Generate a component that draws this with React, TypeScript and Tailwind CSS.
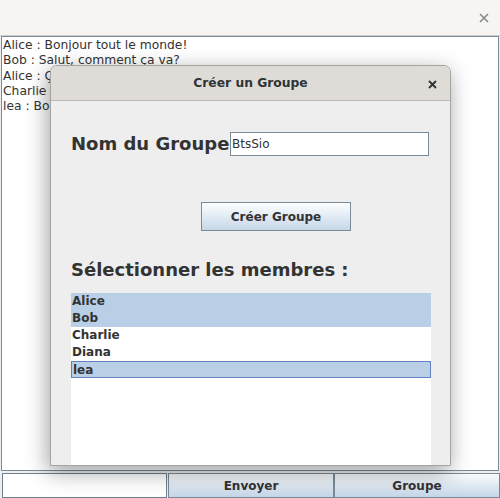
import React from "react";

const font = { fontFamily: '"DejaVu Sans", "Liberation Sans", sans-serif' };

const messages = [
  "Alice : Bonjour tout le monde!",
  "Bob : Salut, comment ça va?",
  "Alice : Ça va bien, merci!",
  "Charlie : Salut tout le monde!",
  "lea : Bonjour",
];

const members = [
  { name: "Alice", sel: true, focus: false },
  { name: "Bob", sel: true, focus: false },
  { name: "Charlie", sel: false, focus: false },
  { name: "Diana", sel: false, focus: false },
  { name: "lea", sel: true, focus: true },
];

export default function App() {
  return (
    <div
      className="relative w-[500px] h-[498px] bg-[#eeeeee] flex flex-col overflow-hidden text-[#333333]"
      style={font}
    >
      {/* window title bar */}
      <div className="h-[36px] shrink-0 bg-[#f6f5f4] border-b border-[#cfcdc9] flex items-center justify-end pr-[11px]">
        <svg width="10" height="10" viewBox="0 0 10 10">
          <path d="M1 1 L9 9 M9 1 L1 9" stroke="#888a85" strokeWidth="1.6" />
        </svg>
      </div>

      {/* chat area */}
      <div className="h-[435px] shrink-0 mx-[1px] border border-[#7a8a99] bg-white pl-[1px] pt-[1px]">
        {messages.map((m) => (
          <div key={m} className="text-[12.3px] leading-[15.3px] whitespace-nowrap">
            {m}
          </div>
        ))}
      </div>

      {/* bottom row */}
      <div className="h-[25px] shrink-0 flex mt-[2px] pl-[2px]">
        <div className="w-[165px] h-full border border-[#6f7f8f] bg-white" />
        <button className="ml-[1px] w-[166px] h-full border border-[#7a8a99] bg-gradient-to-b from-[#fbfcfd] to-[#c4d6e8] text-[12px] font-bold text-[#333333] pt-[1px]" style={font}>
          Envoyer
        </button>
        <button className="w-[166px] h-full border border-[#7a8a99] bg-gradient-to-b from-[#fbfcfd] to-[#c4d6e8] text-[12px] font-bold text-[#333333] pt-[1px]" style={font}>
          Groupe
        </button>
      </div>

      {/* dialog */}
      <div className="absolute left-[50px] top-[65px] w-[401px] h-[401px] rounded-t-[7px] flex flex-col shadow-[-2px_6px_22px_rgba(0,0,0,0.38)] border border-[#a6a4a0] bg-[#eeeeee]">
        <div className="h-[35px] shrink-0 rounded-t-[6px] bg-[#dfdcd8] border-b border-[#bcb8b2] relative flex items-center justify-center">
          <span className="text-[12.3px] font-bold text-[#2e3436]">Créer un Groupe</span>
          <svg className="absolute right-[13px] top-[14px]" width="9" height="9" viewBox="0 0 9 9">
            <path d="M1 1 L8 8 M8 1 L1 8" stroke="#2e3436" strokeWidth="1.8" />
          </svg>
        </div>
        <div className="flex-1 flex flex-col pl-[20px] pr-[19px]">
          <div className="mt-[31px] flex items-center h-[24px]">
            <span className="text-[18px] font-bold leading-none w-[159px] whitespace-nowrap">Nom du Groupe</span>
            <div className="w-[199px] h-[24px] border border-[#7a8a99] bg-white flex items-center pl-[1px] text-[12px]">
              BtsSio
            </div>
          </div>
          <div className="mt-[46px] pl-[130px]">
            <button
              className="w-[150px] h-[29px] border border-[#7a8a99] bg-gradient-to-b from-[#fdfeff] to-[#c6d7e8] text-[12px] font-bold text-[#333333]"
              style={font}
            >
              Créer Groupe
            </button>
          </div>
          <div className="mt-[28px] text-[18px] font-bold leading-[22px] whitespace-nowrap">
            Sélectionner les membres :
          </div>
          <div className="mt-[12px] flex-1 bg-white">
            {members.map((m) => (
              <div
                key={m.name}
                className={`h-[17px] text-[12px] font-bold leading-[17px] pl-[1px] ${
                  m.sel ? "bg-[#b8cfe5]" : ""
                } ${m.focus ? "border border-[#6382bf] leading-[15px]" : ""}`}
              >
                {m.name}
              </div>
            ))}
          </div>
        </div>
      </div>
    </div>
  );
}
